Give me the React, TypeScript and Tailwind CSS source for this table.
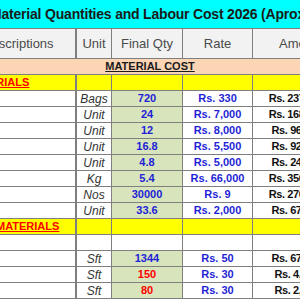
export default function App() {
  const rows = [
    { unit: "Bags", qty: "720", rate: "Rs. 330", amount: "Rs. 237,600" },
    { unit: "Unit", qty: "24", rate: "Rs. 7,000", amount: "Rs. 168,000" },
    { unit: "Unit", qty: "12", rate: "Rs. 8,000", amount: "Rs. 96,000" },
    { unit: "Unit", qty: "16.8", rate: "Rs. 5,500", amount: "Rs. 92,400" },
    { unit: "Unit", qty: "4.8", rate: "Rs. 5,000", amount: "Rs. 24,000" },
    { unit: "Kg", qty: "5.4", rate: "Rs. 66,000", amount: "Rs. 356,400" },
    { unit: "Nos", qty: "30000", rate: "Rs. 9", amount: "Rs. 270,000" },
    { unit: "Unit", qty: "33.6", rate: "Rs. 2,000", amount: "Rs. 67,200" },
  ];
  const finishing = [
    { unit: "Sft", qty: "1344", red: false, rate: "Rs. 50", amount: "Rs. 67,200" },
    { unit: "Sft", qty: "150", red: true, rate: "Rs. 30", amount: "Rs. 4,500" },
    { unit: "Sft", qty: "80", red: true, rate: "Rs. 30", amount: "Rs. 2,400" },
  ];

  const cell = "h-full border-r border-[#7f7f7f] flex items-center justify-center";
  const amt = "w-[88px] text-[11px] font-bold text-[#111111] tracking-[-0.4px]";

  return (
    <div className="w-[300px] h-[300px] overflow-hidden bg-white" style={{ fontFamily: '"Liberation Sans", Arial, sans-serif' }}>
      <div className="ml-[-35px] w-[376px]">
        {/* Title */}
        <div className="h-[29px] bg-[#00ffff] border-b border-[#7f7f7f] flex items-center pl-[25px]">
          <span className="text-[14px] font-bold text-[#1a1a1a] whitespace-nowrap tracking-[-0.2px]">
            Material Quantities and Labour Cost 2026 (Aproximate)
          </span>
        </div>

        {/* Header */}
        <div className="h-[30px] flex bg-[#f2f2f2] border-b border-[#7f7f7f] text-[13px] text-[#4a4a4a]">
          <div className={`${cell} w-[112px] border-r-2`}>Discriptions</div>
          <div className={`${cell} w-[35px]`}>Unit</div>
          <div className={`${cell} w-[71px]`}>Final Qty</div>
          <div className={`${cell} w-[70px]`}>Rate</div>
          <div className={`${cell} w-[88px] !justify-start pl-[26px]`}>Amount</div>
        </div>

        {/* Section */}
        <div className="h-[16px] flex items-center justify-center bg-[#fcd5b4] border-b border-[#7f7f7f] pr-[6px]">
          <span className="text-[11px] font-bold underline text-[#1a1a1a]">MATERIAL COST</span>
        </div>

        <div className="h-[16px] flex bg-[#ffff00] border-b border-[#7f7f7f]">
          <div className={`${cell} w-[112px] border-r-2 !justify-start`}>
            <span className="ml-[1px] text-[11px] font-bold underline text-[#ff0000]">MATERIALS</span>
          </div>
          <div className={`${cell} w-[35px]`} />
          <div className={`${cell} w-[71px]`} />
          <div className={`${cell} w-[70px]`} />
          <div className={`${cell} w-[88px]`} />
        </div>

        {rows.map((r, i) => (
          <div key={i} className="h-[16px] flex border-b border-[#7f7f7f]">
            <div className={`${cell} w-[112px] border-r-2`} />
            <div className={`${cell} w-[35px] text-[12px] italic text-[#333333]`}>{r.unit}</div>
            <div className={`${cell} w-[71px] bg-[#d8e4bc] text-[11px] font-bold text-[#1f1fd6]`}>{r.qty}</div>
            <div className={`${cell} w-[70px] text-[11px] font-bold text-[#1f1fd6]`}>{r.rate}</div>
            <div className={`${cell} ${amt}`}>{r.amount}</div>
          </div>
        ))}

        <div className="h-[16px] flex bg-[#ffff00] border-b border-[#7f7f7f]">
          <div className={`${cell} w-[112px] border-r-2 !justify-start`}>
            <span className="ml-[31px] text-[11px] font-bold underline text-[#ff0000]">MATERIALS</span>
          </div>
          <div className={`${cell} w-[35px]`} />
          <div className={`${cell} w-[71px]`} />
          <div className={`${cell} w-[70px]`} />
          <div className={`${cell} w-[88px]`} />
        </div>

        <div className="h-[16px] flex border-b border-[#7f7f7f]">
          <div className={`${cell} w-[112px] border-r-2`} />
          <div className={`${cell} w-[35px]`} />
          <div className={`${cell} w-[71px]`} />
          <div className={`${cell} w-[70px]`} />
          <div className={`${cell} w-[88px]`} />
        </div>

        {finishing.map((r, i) => (
          <div key={i} className="h-[16px] flex border-b border-[#7f7f7f]">
            <div className={`${cell} w-[112px] border-r-2`} />
            <div className={`${cell} w-[35px] text-[12px] italic text-[#333333]`}>{r.unit}</div>
            <div
              className={`${cell} w-[71px] bg-[#d8e4bc] text-[11px] font-bold ${r.red ? "text-[#ff0000]" : "text-[#1f1fd6]"}`}
            >
              {r.qty}
            </div>
            <div className={`${cell} w-[70px] text-[11px] font-bold text-[#1f1fd6]`}>{r.rate}</div>
            <div className={`${cell} ${amt}`}>{r.amount}</div>
          </div>
        ))}
      </div>
    </div>
  );
}
